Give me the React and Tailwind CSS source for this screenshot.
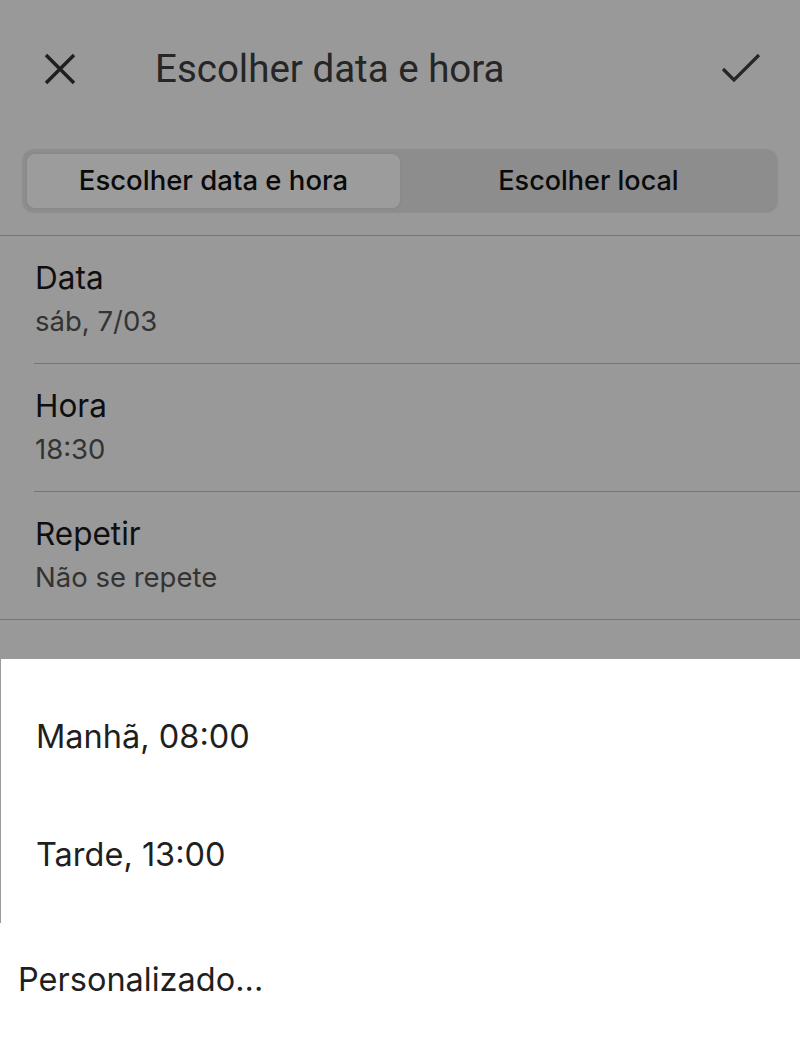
import React from "react";

const roboto = { fontFamily: "Roboto, 'Noto Sans', Arial, sans-serif" };
const inter = { fontFamily: "Inter, 'Noto Sans', Arial, sans-serif" };

const rows = [
  { title: "Data", value: "sáb, 7/03" },
  { title: "Hora", value: "18:30" },
  { title: "Repetir", value: "Não se repete" },
];

const Row = ({ title, value, last }) => (
  <>
    <div className="pl-[35px] pt-[24px] pb-[24px]" style={inter}>
      <div className="text-[31.5px] leading-[36px] text-[#0f0f0f]">{title}</div>
      <div className="mt-[7px] text-[27.5px] leading-[36px] text-[#333333]">{value}</div>
    </div>
    <div className={`h-px bg-[#767676] ${last ? "" : "ml-[34px]"}`} />
  </>
);

export default function App() {
  return (
    <div
      className="w-[800px] h-[1053px] bg-[#999999] flex flex-col overflow-hidden"
      style={roboto}
    >
      {/* toolbar */}
      <div className="h-[138px] flex items-center shrink-0">
        <svg width="36" height="36" viewBox="0 0 36 36" className="ml-[42px]">
          <path d="M4 4L32 32M32 4L4 32" stroke="#1f1f1f" strokeWidth="3.5" fill="none" />
        </svg>
        <div className="ml-[77px] text-[38.5px] leading-[44px] text-[#262626]">
          Escolher data e hora
        </div>
        <svg width="42" height="32" viewBox="0 0 42 32" className="ml-auto mr-[38px]">
          <path d="M3 16L14 27L39 2" stroke="#262626" strokeWidth="3.2" fill="none" />
        </svg>
      </div>

      {/* segmented control */}
      <div
        className="mx-[22px] mt-[11px] h-[64px] rounded-[12px] bg-[#8d8d8d] p-[3px] flex shrink-0"
        style={inter}
      >
        <div className="flex-1 rounded-[10px] bg-[#9c9c9c] border-2 border-[#8a8a8a] flex items-center justify-center text-[27.5px] font-medium text-[#0a0a0a]">
          Escolher data e hora
        </div>
        <div className="flex-1 flex items-center justify-center text-[27px] font-medium text-[#0a0a0a]">
          Escolher local
        </div>
      </div>

      <div className="mt-[22px] h-px bg-[#767676] shrink-0" />

      {rows.map((r, i) => (
        <Row key={r.title} {...r} last={i === rows.length - 1} />
      ))}

      <div className="h-[39px] shrink-0" />

      {/* bottom sheet */}
      <div className="bg-white flex-1 flex flex-col" style={inter}>
        <div className="h-[264px] border-l border-[#9a9a9a] pt-[58px] pl-[35px] flex flex-col gap-[78px]">
          <div className="text-[32.5px] leading-[40px] text-[#1f1f1f]">Manhã, 08:00</div>
          <div className="text-[32.5px] leading-[40px] text-[#1f1f1f]">Tarde, 13:00</div>
        </div>
        <div className="pt-[37px] pl-[18px] text-[32.5px] leading-[40px] text-[#1f1f1f]">
          Personalizado...
        </div>
      </div>
    </div>
  );
}
